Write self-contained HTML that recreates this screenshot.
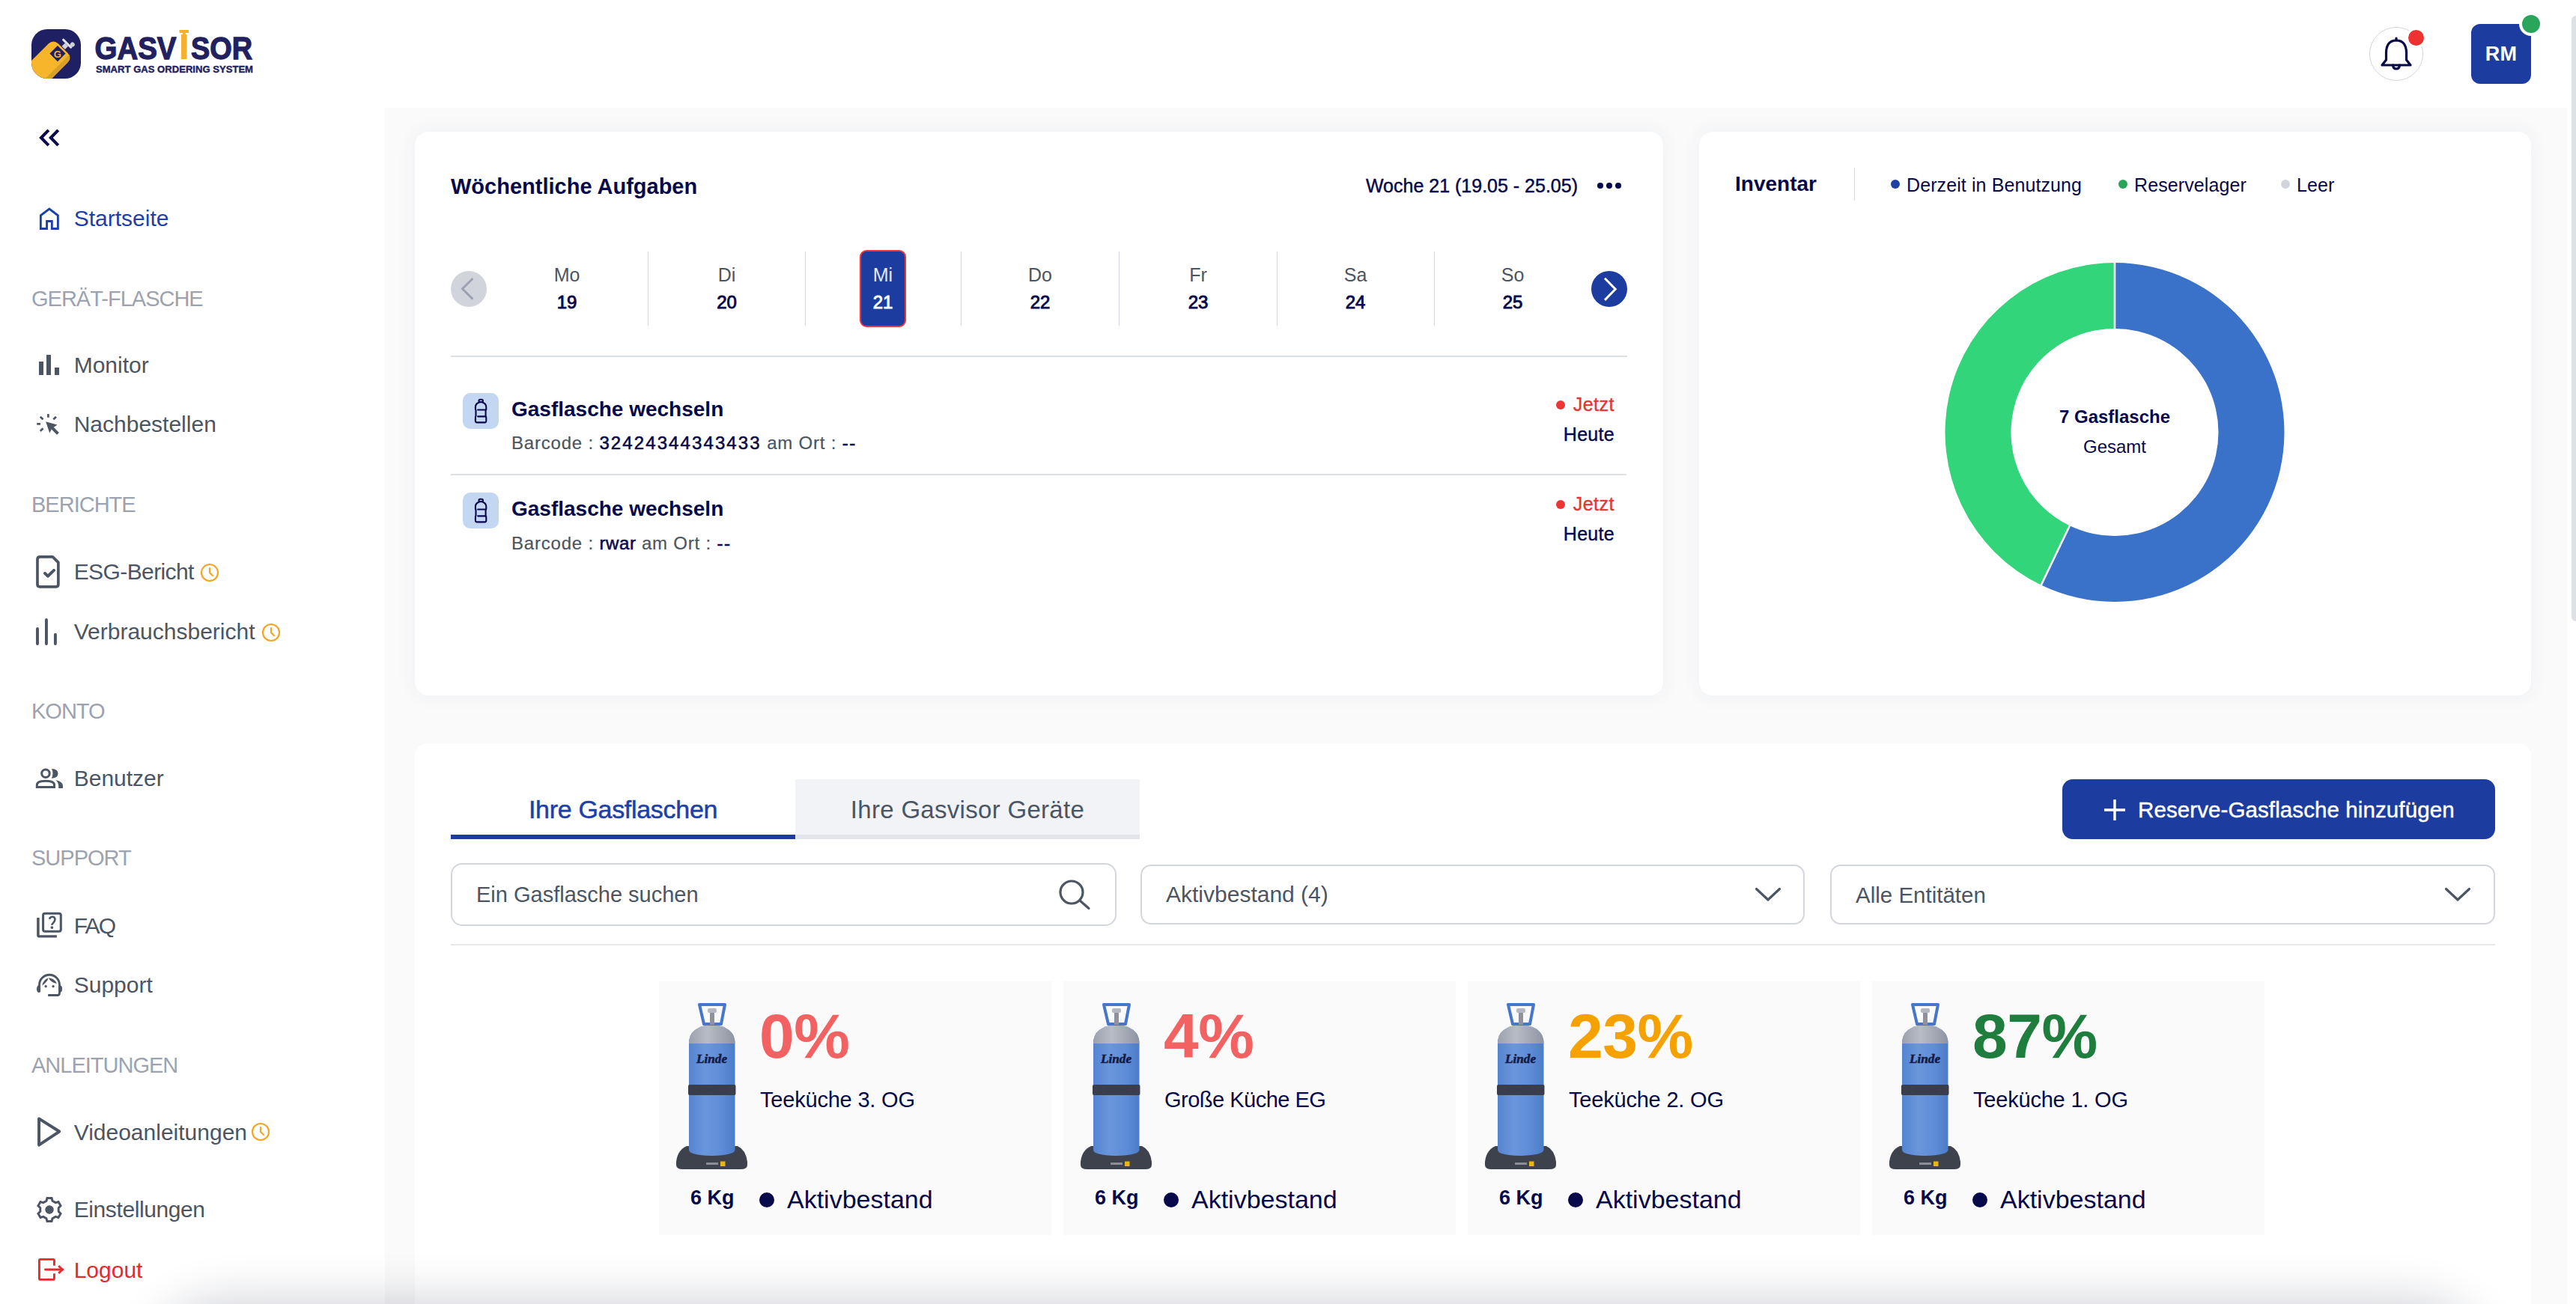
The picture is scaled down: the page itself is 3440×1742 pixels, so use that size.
<!DOCTYPE html>
<html><head><meta charset="utf-8"><title>Gasvisor</title>
<style>
html,body{margin:0;padding:0;}
body{width:3440px;height:1742px;overflow:hidden;position:relative;background:#fff;font-family:"Liberation Sans", sans-serif;}
.a{position:absolute;}
.t{position:absolute;line-height:1;white-space:nowrap;}
b{font-weight:700;}
</style></head><body>
<div class="a" style="left:514px;top:144px;width:2914px;height:1598px;background:#fafafa"></div>
<div class="a" style="left:554px;top:176px;width:1667px;height:752.5px;background:#fff;border-radius:18px;box-shadow:0 0 24px 4px rgba(50,70,130,0.045);"></div>
<div class="a" style="left:2269px;top:176px;width:1111px;height:752.5px;background:#fff;border-radius:18px;box-shadow:0 0 24px 4px rgba(50,70,130,0.045);"></div>
<div class="a" style="left:554px;top:993px;width:2826px;height:767px;background:#fff;border-radius:16px;"></div>
<svg class="a" style="left:42px;top:39px" width="66" height="66" viewBox="0 0 66 66">
<defs><clipPath id="lc"><rect width="66" height="66" rx="21"/></clipPath></defs>
<g clip-path="url(#lc)"><rect width="66" height="66" fill="#1f1f63"/>
<g transform="translate(42 25.5) rotate(-45)">
<rect x="-80" y="-18" width="80" height="36" rx="9" fill="#f7b52c"/>
<path d="M-80 12H0V9Q0 18 -9 18H-80Z" fill="#d6a02a"/>
<rect x="-17.5" y="-7.5" width="15" height="15" fill="#1f1f63"/>
<text x="-10" y="5.2" font-family="Liberation Sans" font-weight="700" font-size="13" fill="#f7b52c" text-anchor="middle" transform="rotate(45 -10 0)">G</text>
<rect x="1" y="-3" width="6" height="6" fill="#d0d0dc"/><rect x="7" y="-9" width="3" height="17" rx="1" fill="#e0e0ea"/><circle cx="12.5" cy="5.5" r="3" fill="#d0d0dc"/>
</g></g></svg>
<svg class="a" style="left:124px;top:38px" width="216" height="62" viewBox="0 0 216 62">
<text x="2.5" y="41" font-family="Liberation Sans" font-weight="700" font-size="42" fill="#21215f" stroke="#21215f" stroke-width="1.3" textLength="109" lengthAdjust="spacingAndGlyphs">GASV</text>
<text x="131" y="41" font-family="Liberation Sans" font-weight="700" font-size="42" fill="#21215f" stroke="#21215f" stroke-width="1.3" textLength="82" lengthAdjust="spacingAndGlyphs">SOR</text>
<rect x="118" y="8" width="7.5" height="33" fill="#f5b02e"/><rect x="115.5" y="2" width="12.5" height="4" fill="#f5b02e"/><rect x="119.8" y="5" width="4" height="4" fill="#f5b02e"/>
<text x="4" y="59" font-family="Liberation Sans" font-weight="700" font-size="13.5" fill="#21215f" stroke="#21215f" stroke-width="0.4" textLength="210" lengthAdjust="spacingAndGlyphs">SMART GAS ORDERING SYSTEM</text>
</svg>
<div class="t" style="top:276.6px;font-size:30px;font-weight:400;color:#1d40a8;left:98.7px;">Startseite</div>
<div class="t" style="top:384.5px;font-size:29px;font-weight:400;color:#9ca3af;left:42px;letter-spacing:-1px;">GERÄT-FLASCHE</div>
<div class="t" style="top:660.0px;font-size:29px;font-weight:400;color:#9ca3af;left:42px;letter-spacing:-1px;">BERICHTE</div>
<div class="t" style="top:935.5px;font-size:29px;font-weight:400;color:#9ca3af;left:42px;letter-spacing:-1px;">KONTO</div>
<div class="t" style="top:1132.0px;font-size:29px;font-weight:400;color:#9ca3af;left:42px;letter-spacing:-1px;">SUPPORT</div>
<div class="t" style="top:1408.5px;font-size:29px;font-weight:400;color:#9ca3af;left:42px;letter-spacing:-1px;">ANLEITUNGEN</div>
<div class="t" style="top:748.6px;font-size:30px;font-weight:400;color:#4b5563;left:98.7px;letter-spacing:-0.6px;">ESG-Bericht</div>
<div class="t" style="top:473.1px;font-size:30px;font-weight:400;color:#4b5563;left:98.7px;">Monitor</div>
<div class="t" style="top:552.3px;font-size:30px;font-weight:400;color:#4b5563;left:98.7px;">Nachbestellen</div>
<div class="t" style="top:828.6px;font-size:30px;font-weight:400;color:#4b5563;left:98.7px;">Verbrauchsbericht</div>
<div class="t" style="top:1025.1px;font-size:30px;font-weight:400;color:#4b5563;left:98.7px;">Benutzer</div>
<div class="t" style="top:1300.6px;font-size:30px;font-weight:400;color:#4b5563;left:98.7px;">Support</div>
<div class="t" style="top:1497.6px;font-size:30px;font-weight:400;color:#4b5563;left:98.7px;">Videoanleitungen</div>
<div class="t" style="top:1221.6px;font-size:30px;font-weight:400;color:#4b5563;left:98.7px;letter-spacing:-1.8px;">FAQ</div>
<div class="t" style="top:1601.1px;font-size:30px;font-weight:400;color:#4b5563;left:98.7px;letter-spacing:-0.4px;">Einstellungen</div>
<div class="t" style="top:1681.6px;font-size:30px;font-weight:400;color:#e62a2a;left:98.7px;">Logout</div>
<div class="a" style="left:52.3px;top:483px;width:5.700000000000003px;height:17.600000000000023px;background:#4b5563"></div>
<div class="a" style="left:62px;top:474.4px;width:5.799999999999997px;height:26.200000000000045px;background:#4b5563"></div>
<div class="a" style="left:72.5px;top:490.5px;width:6.5px;height:10.100000000000023px;background:#4b5563"></div>
<svg class="a" style="left:266.8px;top:751.6px" width="26" height="26" viewBox="0 0 26 26"><circle cx="13" cy="13" r="11" fill="none" stroke="#f5a524" stroke-width="2.2"/><path d="M13 7V13l4 4" fill="none" stroke="#f5a524" stroke-width="2.2" stroke-linecap="round"/></svg>
<svg class="a" style="left:348.5px;top:831.5px" width="26" height="26" viewBox="0 0 26 26"><circle cx="13" cy="13" r="11" fill="none" stroke="#f5a524" stroke-width="2.2"/><path d="M13 7V13l4 4" fill="none" stroke="#f5a524" stroke-width="2.2" stroke-linecap="round"/></svg>
<svg class="a" style="left:335px;top:1499px" width="26" height="26" viewBox="0 0 26 26"><circle cx="13" cy="13" r="11" fill="none" stroke="#f5a524" stroke-width="2.2"/><path d="M13 7V13l4 4" fill="none" stroke="#f5a524" stroke-width="2.2" stroke-linecap="round"/></svg>
<svg class="a" style="left:40px;top:155px" width="60" height="60" viewBox="0 0 1304 1304"><path d="M540 410L325 630L540 850M820 410L605 630L820 850" fill="none" stroke="#08094b" stroke-width="88" stroke-linejoin="miter"/></svg>
<svg class="a" style="left:40px;top:262px" width="60" height="60" viewBox="0 0 1304 1304"><path d="M312 945V560L562 370L812 560V945H637V727H490V945Z" fill="none" stroke="#1d40a8" stroke-width="62"/></svg>
<svg class="a" style="left:40px;top:540px" width="60" height="60" viewBox="0 0 1304 1304"><g stroke="#4b5563" stroke-width="60"><path d="M530 285V385"/><path d="M300 362L380 438"/><path d="M760 362L680 438"/><path d="M200 572H305"/><path d="M380 700L300 780"/></g>
<path d="M460 505L795 600L690 668L845 825L782 888L625 730L570 835Z" fill="#4b5563"/></svg>
<svg class="a" style="left:40px;top:735px" width="60" height="60" viewBox="0 0 1304 1304"><path d="M660 192H290Q217 192 217 265V990Q217 1063 290 1063H750Q823 1063 823 990V355Z" fill="none" stroke="#4b5563" stroke-width="80" stroke-linejoin="round"/>
<path d="M435 670L518 755L695 585" fill="none" stroke="#4b5563" stroke-width="85" stroke-linecap="round" stroke-linejoin="round"/></svg>
<svg class="a" style="left:40px;top:815px" width="60" height="60" viewBox="0 0 1304 1304"><g stroke="#4b5563" stroke-width="85" stroke-linecap="round"><path d="M217 542V978"/><path d="M477 282V978"/><path d="M737 712V978"/></g></svg>
<svg class="a" style="left:40px;top:1010px" width="60" height="60" viewBox="0 0 1304 1304"><circle cx="455" cy="505" r="114" fill="none" stroke="#4b5563" stroke-width="66"/>
<path d="M202 903V840Q202 722 455 722Q707 722 707 840V903Z" fill="none" stroke="#4b5563" stroke-width="64"/>
<path d="M630 368Q815 380 815 505Q815 640 625 648Q700 505 630 368Z" fill="#4b5563"/>
<path d="M745 695Q955 740 955 860V935H830V860Q825 760 745 695Z" fill="#4b5563"/></svg>
<svg class="a" style="left:40px;top:1205px" width="60" height="60" viewBox="0 0 1304 1304"><rect x="382" y="332" width="515" height="520" rx="55" fill="none" stroke="#4b5563" stroke-width="66"/>
<path d="M237 455V960Q237 997 275 997H780" fill="none" stroke="#4b5563" stroke-width="76"/>
<path d="M562 495Q590 430 650 430Q727 430 727 505Q727 555 672 610Q640 645 630 668" fill="none" stroke="#4b5563" stroke-width="56"/>
<circle cx="638" cy="740" r="40" fill="#4b5563"/></svg>
<svg class="a" style="left:40px;top:1285px" width="60" height="60" viewBox="0 0 1304 1304"><path d="M272 880V667A293 293 0 0 1 858 667V900Q858 967 792 967H525" fill="none" stroke="#4b5563" stroke-width="62"/>
<ellipse cx="252" cy="785" rx="55" ry="102" fill="#4b5563"/><ellipse cx="885" cy="785" rx="50" ry="96" fill="#4b5563"/>
<path d="M350 690Q385 520 532 468Q518 570 350 690Z" fill="#4b5563"/><path d="M540 460Q705 470 782 628Q595 595 540 460Z" fill="#4b5563"/>
<circle cx="460" cy="710" r="36" fill="#4b5563"/><circle cx="675" cy="710" r="36" fill="#4b5563"/></svg>
<svg class="a" style="left:40px;top:1482px" width="60" height="60" viewBox="0 0 1304 1304"><path d="M262 270L852 642L262 1035Z" fill="none" stroke="#4b5563" stroke-width="86" stroke-linejoin="round"/></svg>
<svg class="a" style="left:40px;top:1590px" width="60" height="60" viewBox="0 0 1304 1304"><path d="M477.1 309.7L499.2 226.3L630.8 226.3L652.9 309.7L742.1 361.2L825.4 338.7L891.2 452.7L830.0 513.5L830.0 616.5L891.2 677.3L825.4 791.3L742.1 768.8L652.9 820.3L630.8 903.7L499.2 903.7L477.1 820.3L387.9 768.8L304.6 791.3L238.8 677.3L300.0 616.5L300.0 513.5L238.8 452.7L304.6 338.7L387.9 361.2Z" fill="none" stroke="#4b5563" stroke-width="64" stroke-linejoin="miter"/><circle cx="565" cy="565" r="125" fill="#4b5563"/></svg>
<svg class="a" style="left:40px;top:1670px" width="60" height="60" viewBox="0 0 1304 1304"><g fill="none" stroke="#e62a2a" stroke-width="62"><path d="M705 450V300Q705 270 675 270H300Q270 270 270 300V825Q270 855 300 855H675Q705 855 705 825V680"/>
<path d="M445 565H950" stroke-linecap="round"/><path d="M830 455L940 565L830 675"/></g></svg>
<div class="a" style="left:3164px;top:36px;width:72px;height:72px;border:1px solid #d4d6dc;border-radius:50%;box-sizing:border-box;background:#fff"></div>
<svg class="a" style="left:3178px;top:46px" width="44" height="52" viewBox="0 0 44 52">
<g fill="none" stroke="#08094b" stroke-width="3.2" stroke-linejoin="round" stroke-linecap="round">
<path d="M22 5V8"/><path d="M22 8Q9 8 8.5 24V34L3 41H41L35.5 34V24Q35 8 22 8Z"/><path d="M17.5 41Q18 46 22 46Q26 46 26.5 41"/></g></svg>
<div class="a" style="left:3212.5px;top:36.5px;width:27.0px;height:27.0px;background:#ee3232;border-radius:50%;border:3.5px solid #fff;box-sizing:border-box"></div>
<div class="a" style="left:3300px;top:32px;width:80px;height:80px;background:#1c3d9f;border-radius:12px"></div>
<div class="t" style="top:58.7px;font-size:27px;font-weight:700;color:#fff;left:2740px;width:1200px;text-align:center;letter-spacing:0.3px;">RM</div>
<div class="a" style="left:3364px;top:16px;width:32px;height:32px;background:#2aa55c;border-radius:50%;border:4px solid #fff;box-sizing:border-box"></div>
<div class="a" style="left:3434px;top:21px;width:12px;height:809px;background:#dde0e5;border-radius:6px"></div>
<div class="t" style="top:234.5px;font-size:29px;font-weight:700;color:#08094b;left:602px;">Wöchentliche Aufgaben</div>
<div class="t" style="top:235.8px;font-size:25px;font-weight:400;color:#08094b;right:1333px;letter-spacing:0px;-webkit-text-stroke:0.45px #08094b;">Woche 21 (19.05 - 25.05)</div>
<div class="a" style="left:2133px;top:244px;width:8px;height:8px;background:#08094b;border-radius:50%"></div>
<div class="a" style="left:2145px;top:244px;width:8px;height:8px;background:#08094b;border-radius:50%"></div>
<div class="a" style="left:2157px;top:244px;width:8px;height:8px;background:#08094b;border-radius:50%"></div>
<div class="a" style="left:602px;top:362px;width:48px;height:48px;background:#d1d4da;border-radius:50%"></div>
<svg class="a" style="left:602px;top:361px" width="48" height="48" viewBox="0 0 48 48">
<path d="M29.4 11L15.5 24.8L29.4 38.6" fill="none" stroke="#9ca0b2" stroke-width="2.9" stroke-linecap="butt" stroke-linejoin="miter"/></svg>
<div class="a" style="left:2125px;top:362px;width:48px;height:48px;background:#1c3d9f;border-radius:50%"></div>
<svg class="a" style="left:2125px;top:362px" width="48" height="48" viewBox="0 0 48 48">
<path d="M18 9.7L32.2 24.3L18 38.9" fill="none" stroke="#fff" stroke-width="3" stroke-linecap="butt" stroke-linejoin="miter"/></svg>
<div class="t" style="top:354.8px;font-size:25px;font-weight:400;color:#4b5563;left:157px;width:1200px;text-align:center;">Mo</div>
<div class="t" style="top:391.7px;font-size:24px;font-weight:400;color:#08094b;left:157px;width:1200px;text-align:center;-webkit-text-stroke:0.9px #08094b;">19</div>
<div class="t" style="top:354.8px;font-size:25px;font-weight:400;color:#4b5563;left:370.5px;width:1200px;text-align:center;">Di</div>
<div class="t" style="top:391.7px;font-size:24px;font-weight:400;color:#08094b;left:370.5px;width:1200px;text-align:center;-webkit-text-stroke:0.9px #08094b;">20</div>
<div class="a" style="left:865.0px;top:336px;width:1.0px;height:99px;background:#d1d5db"></div>
<div class="a" style="left:1148px;top:334px;width:62px;height:103px;background:#1c3d9f;border:2.5px solid #ee3535;border-radius:9px;box-sizing:border-box"></div>
<div class="t" style="top:354.8px;font-size:25px;font-weight:400;color:#e4e7f2;left:579px;width:1200px;text-align:center;">Mi</div>
<div class="t" style="top:391.7px;font-size:24px;font-weight:400;color:#fff;left:579px;width:1200px;text-align:center;-webkit-text-stroke:0.9px #fff;">21</div>
<div class="a" style="left:1075.0px;top:336px;width:1.0px;height:99px;background:#d1d5db"></div>
<div class="t" style="top:354.8px;font-size:25px;font-weight:400;color:#4b5563;left:789px;width:1200px;text-align:center;">Do</div>
<div class="t" style="top:391.7px;font-size:24px;font-weight:400;color:#08094b;left:789px;width:1200px;text-align:center;-webkit-text-stroke:0.9px #08094b;">22</div>
<div class="a" style="left:1283.0px;top:336px;width:1.0px;height:99px;background:#d1d5db"></div>
<div class="t" style="top:354.8px;font-size:25px;font-weight:400;color:#4b5563;left:1000px;width:1200px;text-align:center;">Fr</div>
<div class="t" style="top:391.7px;font-size:24px;font-weight:400;color:#08094b;left:1000px;width:1200px;text-align:center;-webkit-text-stroke:0.9px #08094b;">23</div>
<div class="a" style="left:1494.0px;top:336px;width:1.0px;height:99px;background:#d1d5db"></div>
<div class="t" style="top:354.8px;font-size:25px;font-weight:400;color:#4b5563;left:1210px;width:1200px;text-align:center;">Sa</div>
<div class="t" style="top:391.7px;font-size:24px;font-weight:400;color:#08094b;left:1210px;width:1200px;text-align:center;-webkit-text-stroke:0.9px #08094b;">24</div>
<div class="a" style="left:1705.0px;top:336px;width:1.0px;height:99px;background:#d1d5db"></div>
<div class="t" style="top:354.8px;font-size:25px;font-weight:400;color:#4b5563;left:1420px;width:1200px;text-align:center;">So</div>
<div class="t" style="top:391.7px;font-size:24px;font-weight:400;color:#08094b;left:1420px;width:1200px;text-align:center;-webkit-text-stroke:0.9px #08094b;">25</div>
<div class="a" style="left:1915.0px;top:336px;width:1.0px;height:99px;background:#d1d5db"></div>
<div class="a" style="left:602px;top:474.5px;width:1571px;height:2.0px;background:#dcdfe4"></div>
<div class="a" style="left:618px;top:525px;width:48px;height:48px;background:#c3d7f3;border-radius:10px"></div>
<svg class="a" style="left:612px;top:519px" width="60" height="60" viewBox="0 0 1304 1304">
<g fill="none" stroke="#08094b" stroke-width="46" stroke-linejoin="round" stroke-linecap="round">
<rect x="597" y="322" width="118" height="72" rx="34"/>
<path d="M600 408Q500 440 498 540V600Q510 620 510 640V800Q498 820 498 850V940Q498 985 545 985H770Q810 985 810 940V850Q810 820 795 800V640Q810 620 810 600V540Q808 440 710 408"/>
<path d="M568 620H790M568 812H790"/></g></svg>
<div class="t" style="top:533.3px;font-size:28px;font-weight:700;color:#08094b;left:683px;">Gasflasche wechseln</div>
<div class="t" style="top:579.7px;font-size:24px;font-weight:400;color:#4b5563;left:683px;letter-spacing:0.8px;-webkit-text-stroke:0.2px #4b5563;">Barcode : <span style="color:#08094b;letter-spacing:2.1px;-webkit-text-stroke:0.55px #08094b">32424344343433</span> am Ort : <span style="color:#08094b;letter-spacing:1.5px;-webkit-text-stroke:0.6px #08094b">--</span></div>
<div class="t" style="top:527.8px;font-size:25px;font-weight:400;color:#e53535;right:1284px;letter-spacing:0.5px;-webkit-text-stroke:0.4px #e53535;">Jetzt</div>
<div class="a" style="left:2078px;top:535px;width:12px;height:12px;background:#ee3535;border-radius:50%"></div>
<div class="t" style="top:567.8px;font-size:25px;font-weight:400;color:#08094b;right:1284px;letter-spacing:0.3px;-webkit-text-stroke:0.4px #08094b;">Heute</div>
<div class="a" style="left:618px;top:658px;width:48px;height:48px;background:#c3d7f3;border-radius:10px"></div>
<svg class="a" style="left:612px;top:652px" width="60" height="60" viewBox="0 0 1304 1304">
<g fill="none" stroke="#08094b" stroke-width="46" stroke-linejoin="round" stroke-linecap="round">
<rect x="597" y="322" width="118" height="72" rx="34"/>
<path d="M600 408Q500 440 498 540V600Q510 620 510 640V800Q498 820 498 850V940Q498 985 545 985H770Q810 985 810 940V850Q810 820 795 800V640Q810 620 810 600V540Q808 440 710 408"/>
<path d="M568 620H790M568 812H790"/></g></svg>
<div class="t" style="top:666.3px;font-size:28px;font-weight:700;color:#08094b;left:683px;">Gasflasche wechseln</div>
<div class="t" style="top:713.7px;font-size:24px;font-weight:400;color:#4b5563;left:683px;letter-spacing:0.8px;-webkit-text-stroke:0.2px #4b5563;">Barcode : <span style="color:#08094b;letter-spacing:0.6px;-webkit-text-stroke:0.55px #08094b">rwar</span> am Ort : <span style="color:#08094b;letter-spacing:1.5px;-webkit-text-stroke:0.6px #08094b">--</span></div>
<div class="t" style="top:660.8px;font-size:25px;font-weight:400;color:#e53535;right:1284px;letter-spacing:0.5px;-webkit-text-stroke:0.4px #e53535;">Jetzt</div>
<div class="a" style="left:2078px;top:668px;width:12px;height:12px;background:#ee3535;border-radius:50%"></div>
<div class="t" style="top:700.8px;font-size:25px;font-weight:400;color:#08094b;right:1284px;letter-spacing:0.3px;-webkit-text-stroke:0.4px #08094b;">Heute</div>
<div class="a" style="left:602px;top:632.5px;width:1570px;height:2.0px;background:#dcdfe4"></div>
<div class="t" style="top:232.3px;font-size:28px;font-weight:700;color:#08094b;left:2317px;">Inventar</div>
<div class="a" style="left:2475.5px;top:224px;width:1.5px;height:44px;background:#d6d9de"></div>
<div class="a" style="left:2525px;top:240px;width:12px;height:12px;background:#1d3fa6;border-radius:50%"></div>
<div class="t" style="top:234.8px;font-size:25px;font-weight:400;color:#08094b;left:2546px;letter-spacing:0.1px;">Derzeit in Benutzung</div>
<div class="a" style="left:2829px;top:240px;width:12px;height:12px;background:#27a55a;border-radius:50%"></div>
<div class="t" style="top:234.8px;font-size:25px;font-weight:400;color:#08094b;left:2850px;letter-spacing:0.1px;">Reservelager</div>
<div class="a" style="left:3046px;top:240px;width:12px;height:12px;background:#d1d4da;border-radius:50%"></div>
<div class="t" style="top:234.8px;font-size:25px;font-weight:400;color:#08094b;left:3067px;letter-spacing:0.1px;">Leer</div>
<svg class="a" style="left:0;top:0" width="3440" height="1000" viewBox="0 0 3440 1000">
<path d="M2824.00 351.00A226.5 226.5 0 1 1 2725.73 781.57L2763.91 702.28A138.5 138.5 0 1 0 2824.00 439.00Z" fill="#3a71c9"/>
<path d="M2725.73 781.57A226.5 226.5 0 0 1 2824.00 351.00L2824.00 439.00A138.5 138.5 0 0 0 2763.91 702.28Z" fill="#32d57a"/>
<path d="M2824 349.0V441.0M2764.77 700.48L2724.86 783.37" stroke="#fff" stroke-width="2.6"/></svg>
<div class="t" style="top:544.7px;font-size:24px;font-weight:700;color:#08094b;left:2224px;width:1200px;text-align:center;">7 Gasflasche</div>
<div class="t" style="top:584.7px;font-size:24px;font-weight:400;color:#08094b;left:2224px;width:1200px;text-align:center;">Gesamt</div>
<div class="a" style="left:1062px;top:1041px;width:460px;height:80px;background:#f1f3f6"></div>
<div class="a" style="left:1062px;top:1115px;width:460px;height:6px;background:#e3e5ea"></div>
<div class="a" style="left:602px;top:1115px;width:460px;height:6px;background:#1c3d9f"></div>
<div class="t" style="top:1064.2px;font-size:34px;font-weight:400;color:#1d40a8;left:232px;width:1200px;text-align:center;letter-spacing:-0.3px;-webkit-text-stroke:0.5px #1d40a8;">Ihre Gasflaschen</div>
<div class="t" style="top:1065.1px;font-size:33px;font-weight:400;color:#4b5563;left:692px;width:1200px;text-align:center;letter-spacing:0.3px;">Ihre Gasvisor Geräte</div>
<div class="a" style="left:2754px;top:1041px;width:578px;height:80px;background:#1c3d9f;border-radius:14px"></div>
<svg class="a" style="left:2808px;top:1066px" width="32" height="32" viewBox="0 0 32 32">
<path d="M16 2V30M2 16H30" stroke="#fff" stroke-width="3.4"/></svg>
<div class="t" style="top:1067.0px;font-size:29.5px;font-weight:400;color:#fff;left:2855px;letter-spacing:0.1px;-webkit-text-stroke:0.45px #fff;">Reserve-Gasflasche hinzufügen</div>
<div class="a" style="left:602px;top:1153px;width:889px;height:84px;border:2px solid #d3d6dc;border-radius:15px;box-sizing:border-box;background:#fff"></div>
<div class="a" style="left:1523px;top:1155px;width:887px;height:80px;border:2px solid #d3d6dc;border-radius:14px;box-sizing:border-box;background:#fff"></div>
<div class="a" style="left:2444px;top:1155px;width:888px;height:80px;border:2px solid #d3d6dc;border-radius:14px;box-sizing:border-box;background:#fff"></div>
<div class="t" style="top:1181.0px;font-size:29px;font-weight:400;color:#4b5563;left:636px;">Ein Gasflasche suchen</div>
<svg class="a" style="left:1410px;top:1172px" width="50" height="46" viewBox="0 0 50 46">
<circle cx="21" cy="20" r="15" fill="none" stroke="#4b5563" stroke-width="3.2"/><path d="M32 31L44 41.5" stroke="#4b5563" stroke-width="3.2" stroke-linecap="round"/></svg>
<div class="t" style="top:1180.1px;font-size:30px;font-weight:400;color:#4b5563;left:1557px;">Aktivbestand (4)</div>
<div class="t" style="top:1180.5px;font-size:29.5px;font-weight:400;color:#4b5563;left:2478px;">Alle Entitäten</div>
<svg class="a" style="left:2340.5px;top:1180px" width="40" height="30" viewBox="0 0 40 30">
<path d="M4.5 7.5L20 22L35.5 7.5" fill="none" stroke="#4b5563" stroke-width="3.2" stroke-linecap="round" stroke-linejoin="round"/></svg>
<svg class="a" style="left:3261.5px;top:1180px" width="40" height="30" viewBox="0 0 40 30">
<path d="M4.5 7.5L20 22L35.5 7.5" fill="none" stroke="#4b5563" stroke-width="3.2" stroke-linecap="round" stroke-linejoin="round"/></svg>
<div class="a" style="left:602px;top:1261px;width:2730px;height:2px;background:#e6e8ec"></div>
<svg width="0" height="0" style="position:absolute"><symbol id="cyl" viewBox="0 0 110 240">
<defs>
<linearGradient id="gb" x1="0" x2="1" y1="0" y2="0"><stop offset="0" stop-color="#5584d0"/><stop offset="0.35" stop-color="#6a96dc"/><stop offset="0.7" stop-color="#5e8cd6"/><stop offset="1" stop-color="#4d7cc8"/></linearGradient>
<linearGradient id="gd" x1="0" x2="1" y1="0" y2="0"><stop offset="0" stop-color="#9ca1ae"/><stop offset="0.4" stop-color="#b9bcc6"/><stop offset="1" stop-color="#8f94a3"/></linearGradient>
</defs>
<path d="M8 222Q10 206 22 201H90Q101 206 103 222V226Q103 232 94 232H17Q8 232 8 226Z" fill="#3e424d"/>
<path d="M25 64Q25 41 55.5 39Q86.5 41 86.5 64V206Q86.5 213 55.5 214Q25 213 25 206Z" fill="url(#gb)"/>
<path d="M25 64Q25 41 55.5 39Q86.5 41 86.5 64Z" fill="url(#gd)"/>
<path d="M39 12H73L68 38H45Z" fill="none" stroke="#4677cc" stroke-width="4" stroke-linejoin="round"/>
<rect x="50" y="17" width="12" height="6" rx="2" fill="#b5b8c0"/><rect x="53" y="23" width="6" height="16" fill="#8e929c"/>
<rect x="24" y="119" width="63.5" height="14" rx="2" fill="#3a3e4c"/>
<text x="55.5" y="90" font-family="Liberation Serif" font-style="italic" font-weight="700" font-size="16" fill="#141a45" stroke="#141a45" stroke-width="0.5" text-anchor="middle" textLength="41" lengthAdjust="spacingAndGlyphs">Linde</text>
<rect x="67" y="221.5" width="6.5" height="6.5" fill="#e8b422"/>
<rect x="48" y="223" width="16" height="3" fill="#8a8e98"/>
</symbol></svg>
<div class="a" style="left:880px;top:1311px;width:524px;height:339px;background:#fafafa"></div>
<svg class="a" style="left:895px;top:1330px" width="110" height="240"><use href="#cyl"/></svg>
<div class="t" style="top:1341.9px;font-size:84px;font-weight:700;color:#f26262;left:1014px;letter-spacing:-0.5px;">0%</div>
<div class="t" style="top:1454.5px;font-size:29px;font-weight:400;color:#08094b;left:1015px;letter-spacing:-0.2px;">Teeküche 3. OG</div>
<div class="t" style="top:1587.1px;font-size:27px;font-weight:700;color:#08094b;left:922px;">6 Kg</div>
<div class="a" style="left:1014px;top:1592.6px;width:20px;height:20.0px;background:#08094b;border-radius:50%"></div>
<div class="t" style="top:1585.2px;font-size:34px;font-weight:400;color:#08094b;left:1051px;">Aktivbestand</div>
<div class="a" style="left:1420px;top:1311px;width:524px;height:339px;background:#fafafa"></div>
<svg class="a" style="left:1435px;top:1330px" width="110" height="240"><use href="#cyl"/></svg>
<div class="t" style="top:1341.9px;font-size:84px;font-weight:700;color:#f26262;left:1554px;letter-spacing:-0.5px;">4%</div>
<div class="t" style="top:1454.5px;font-size:29px;font-weight:400;color:#08094b;left:1555px;letter-spacing:-0.5px;">Große Küche EG</div>
<div class="t" style="top:1587.1px;font-size:27px;font-weight:700;color:#08094b;left:1462px;">6 Kg</div>
<div class="a" style="left:1554px;top:1592.6px;width:20px;height:20.0px;background:#08094b;border-radius:50%"></div>
<div class="t" style="top:1585.2px;font-size:34px;font-weight:400;color:#08094b;left:1591px;">Aktivbestand</div>
<div class="a" style="left:1960px;top:1311px;width:524px;height:339px;background:#fafafa"></div>
<svg class="a" style="left:1975px;top:1330px" width="110" height="240"><use href="#cyl"/></svg>
<div class="t" style="top:1341.9px;font-size:84px;font-weight:700;color:#f5a200;left:2094px;letter-spacing:-0.5px;">23%</div>
<div class="t" style="top:1454.5px;font-size:29px;font-weight:400;color:#08094b;left:2095px;letter-spacing:-0.2px;">Teeküche 2. OG</div>
<div class="t" style="top:1587.1px;font-size:27px;font-weight:700;color:#08094b;left:2002px;">6 Kg</div>
<div class="a" style="left:2094px;top:1592.6px;width:20px;height:20.0px;background:#08094b;border-radius:50%"></div>
<div class="t" style="top:1585.2px;font-size:34px;font-weight:400;color:#08094b;left:2131px;">Aktivbestand</div>
<div class="a" style="left:2500px;top:1311px;width:524px;height:339px;background:#fafafa"></div>
<svg class="a" style="left:2515px;top:1330px" width="110" height="240"><use href="#cyl"/></svg>
<div class="t" style="top:1341.9px;font-size:84px;font-weight:700;color:#1f7d3d;left:2634px;letter-spacing:-0.5px;">87%</div>
<div class="t" style="top:1454.5px;font-size:29px;font-weight:400;color:#08094b;left:2635px;letter-spacing:-0.2px;">Teeküche 1. OG</div>
<div class="t" style="top:1587.1px;font-size:27px;font-weight:700;color:#08094b;left:2542px;">6 Kg</div>
<div class="a" style="left:2634px;top:1592.6px;width:20px;height:20.0px;background:#08094b;border-radius:50%"></div>
<div class="t" style="top:1585.2px;font-size:34px;font-weight:400;color:#08094b;left:2671px;">Aktivbestand</div>
<div class="a" style="left:200px;top:1748px;width:3120px;height:200px;border-radius:120px;box-shadow:0 -10px 64px 0 rgba(20,25,55,0.2)"></div>
</body></html>
